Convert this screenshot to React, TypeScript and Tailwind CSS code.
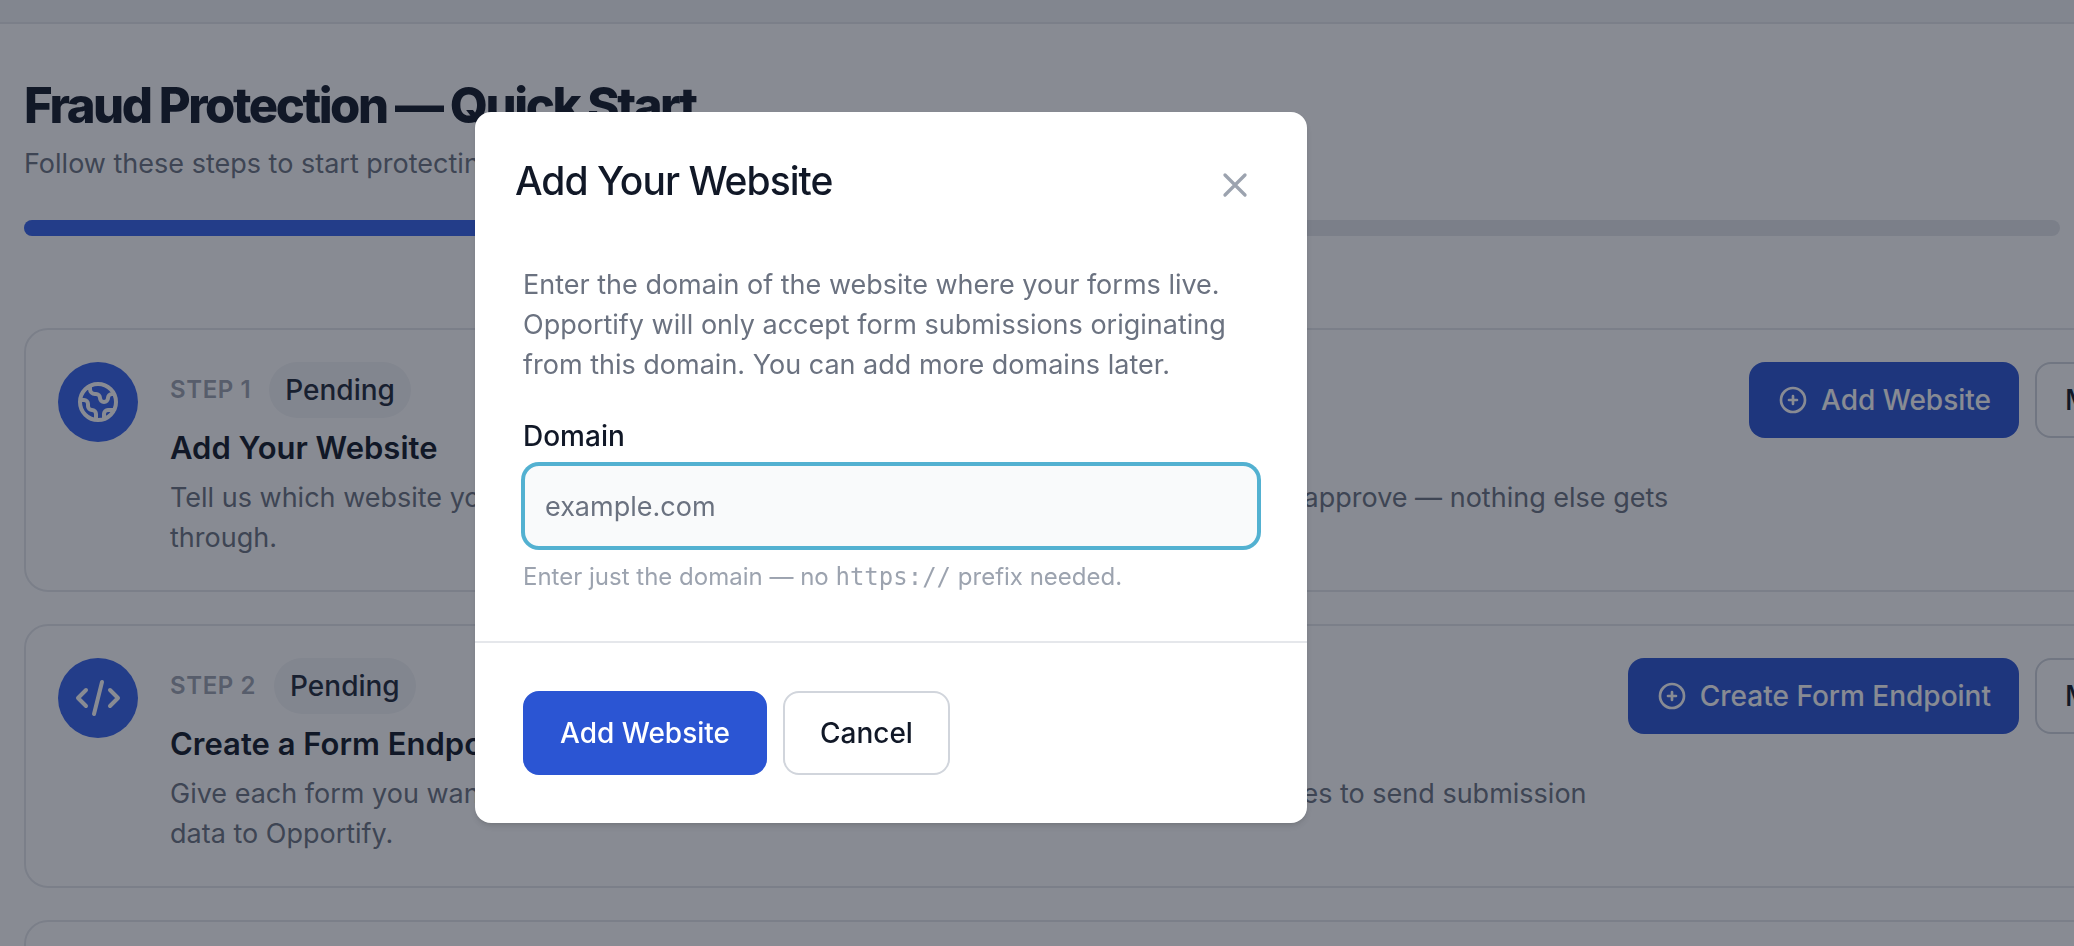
import { useState } from 'react'
import type { ReactNode } from 'react'

interface StepCardProps {
  step: number
  title: string
  description: string
  action: string
  icon: ReactNode
}

function StrokeIcon({ d, className }: { d: string; className: string }) {
  return (
    <svg
      className={className}
      viewBox="0 0 24 24"
      fill="none"
      stroke="currentColor"
      strokeWidth={2}
      strokeLinecap="round"
      strokeLinejoin="round"
      aria-hidden="true"
    >
      <path d={d} />
    </svg>
  )
}

const ICONS = {
  globe:
    'M3.055 11H5a2 2 0 012 2v1a2 2 0 002 2 2 2 0 012 2v2.945M8 3.935V5.5A2.5 2.5 0 0010.5 8h.5a2 2 0 012 2 2 2 0 104 0 2 2 0 012-2h1.064M15 20.488V18a2 2 0 012-2h3.064M21 12a9 9 0 11-18 0 9 9 0 0118 0z',
  code: 'M10 20l4-16m4 4l4 4-4 4M6 16l-4-4 4-4',
  plusCircle: 'M12 9v3m0 0v3m0-3h3m-3 0H9m12 0a9 9 0 11-18 0 9 9 0 0118 0z',
  key: 'M15 7a2 2 0 012 2m4 0a6 6 0 01-7.743 5.743L11 17H9v2H7v2H4a1 1 0 01-1-1v-2.586a1 1 0 01.293-.707l5.964-5.964A6 6 0 1121 9z',
  close: 'M6 18L18 6M6 6l12 12',
}

const STEPS: StepCardProps[] = [
  {
    step: 1,
    title: 'Add Your Website',
    description:
      'Tell us which website you use. Opportify only accepts submissions from all domains you approve — nothing else gets through.',
    action: 'Add Website',
    icon: <StrokeIcon d={ICONS.globe} className="size-12" />,
  },
  {
    step: 2,
    title: 'Create a Form Endpoint',
    description:
      'Give each form you want to protect its own endpoint. This is the address your website uses to send submission data to Opportify.',
    action: 'Create Form Endpoint',
    icon: <StrokeIcon d={ICONS.code} className="size-12" />,
  },
  {
    step: 3,
    title: 'Connect Your Form',
    description: 'Add the snippet to your page and send a first test submission.',
    action: 'Connect Form',
    icon: <StrokeIcon d={ICONS.key} className="size-12" />,
  },
]

function StepCard({ step, title, description, action, icon }: StepCardProps) {
  return (
    <li className="flex items-start gap-8 rounded-3xl border-2 border-gray-200 p-8">
      <div className="flex size-20 shrink-0 items-center justify-center rounded-full bg-[#3562ea] text-white">
        {icon}
      </div>
      <div className="min-w-0 flex-1">
        <div className="flex items-center gap-[18px]">
          <span className="text-2xl font-semibold tracking-wide text-[#9ca3af]">STEP {step}</span>
          <span className="rounded-full bg-gray-100 px-4 py-2 text-[28px] leading-10 font-medium text-gray-800">
            Pending
          </span>
        </div>
        <h2 className="mt-2 text-[31px] leading-[44px] font-semibold text-[#111827]">{title}</h2>
        <p className="mt-2 text-[27px] leading-10 text-[#6b7280]">{description}</p>
      </div>
      <div className="flex shrink-0 gap-4">
        <button
          type="button"
          className="flex h-[76px] items-center gap-3 rounded-2xl bg-[#2b55d3] px-7 text-[28px] leading-10 font-medium text-white"
        >
          <StrokeIcon d={ICONS.plusCircle} className="size-8" />
          {action}
        </button>
        <button
          type="button"
          className="h-[76px] rounded-2xl border-2 border-gray-300 px-7 text-[28px] leading-10 font-medium text-[#111827]"
        >
          Manage
        </button>
      </div>
    </li>
  )
}

function AddWebsiteDialog() {
  const [domain, setDomain] = useState('')

  return (
    <div
      role="dialog"
      aria-modal="true"
      aria-labelledby="dialog-title"
      className="w-full max-w-[832px] rounded-2xl bg-white shadow-md"
    >
      <header className="flex items-end justify-between pt-[39px] pr-[46px] pl-10">
        <h2 id="dialog-title" className="text-[39px] leading-[60px] font-medium tracking-tight text-[#111827]">
          Add Your Website
        </h2>
        <button type="button" aria-label="Close" className="p-[6px] text-[#9ca3af]">
          <StrokeIcon d={ICONS.close} className="size-10" />
        </button>
      </header>
      <form onSubmit={(e) => e.preventDefault()}>
        <div className="px-12 pt-[54px] pb-12">
          <p className="text-[27px] leading-10 text-[#6b7280]">
            Enter the domain of the website where your forms live. Opportify will only accept form submissions
            originating from this domain. You can add more domains later.
          </p>
          <label htmlFor="domain" className="mt-[31px] block text-[28px] leading-10 font-medium text-[#111827]">
            Domain
          </label>
          <input
            id="domain"
            type="text"
            value={domain}
            onChange={(e) => setDomain(e.target.value)}
            placeholder="example.com"
            className="mt-2 block h-[84px] w-full rounded-2xl border-2 border-[#53b1d1] bg-gray-50 px-5 text-[27px] text-[#111827] ring-2 ring-[#53b1d1] outline-none placeholder:text-[#6b7280]"
          />
          <p className="mt-[13px] text-2xl leading-8 text-[#9ca3af]">
            Enter just the domain — no <code className="font-['DejaVu_Sans_Mono',monospace]">https://</code> prefix
            needed.
          </p>
        </div>
        <footer className="flex gap-4 border-t-2 border-gray-200 p-12">
          <button
            type="submit"
            className="h-[84px] rounded-2xl border-2 border-[#2b55d3] bg-[#2b55d3] px-[35px] text-[28px] font-medium text-white"
          >
            Add Website
          </button>
          <button
            type="button"
            className="h-[84px] rounded-2xl border-2 border-gray-300 bg-white px-[35px] text-[28px] font-medium text-[#111827]"
          >
            Cancel
          </button>
        </footer>
      </form>
    </div>
  )
}

export default function App() {
  return (
    <div className="h-screen overflow-hidden bg-white font-['Inter',sans-serif] text-[#111827]">
      <div className="h-6 border-b-2 border-gray-200 bg-gray-100" />
      <main className="px-6 pt-[50px]">
        <h1 className="text-[49px] leading-[64px] font-extrabold tracking-tighter">Fraud Protection — Quick Start</h1>
        <p className="mt-[6px] text-[27px] leading-10 text-[#6b7280]">
          Follow these steps to start protecting your forms.
        </p>
        <div className="mt-9 mr-[-10px] h-4 overflow-hidden rounded-lg bg-gray-200">
          <div className="h-full w-1/3 bg-[#3562ea]" />
        </div>
        <ol className="mt-[92px] mr-[-187px] flex flex-col gap-8">
          {STEPS.map((s) => (
            <StepCard key={s.step} {...s} />
          ))}
        </ol>
      </main>

      <div className="fixed inset-0 bg-[#111827]/50 pt-28 pl-[475px]">
        <AddWebsiteDialog />
      </div>
    </div>
  )
}
